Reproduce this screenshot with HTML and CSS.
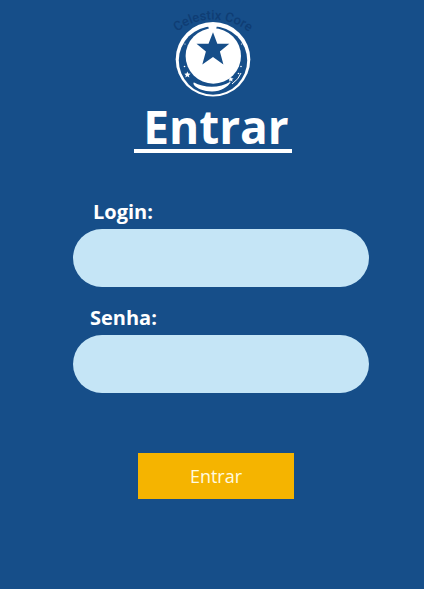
FILE: index.html
```html
<!DOCTYPE html>
<html lang="pt-BR">
<head>
  <meta charset="utf-8">
  <meta name="viewport" content="width=device-width, initial-scale=1">
  <title>Entrar</title>
  <link rel="stylesheet" href="styles.css">
</head>
<body>
  <main class="login">
    <header class="brand">
      <svg class="logo" viewBox="163 0 100 104" role="img" aria-label="Celestix Core">
        <defs>
          <path id="name-arc" d="M173 35.500A58 58 0 0 1 253 35.500"/>
        </defs>
        <text class="logo-name"><textPath href="#name-arc" startOffset="50%" text-anchor="middle">Celestix Core</textPath></text>
        <circle class="light" cx="213" cy="59.300" r="37.300"/>
        <circle class="dark" cx="213" cy="60.500" r="34.200"/>
        <circle class="light" cx="213.300" cy="56" r="27.700"/>
        <path class="light" d="M208 25h9l-1 5h-7z"/>
        <path class="light" d="M194 82.500C203 87.500 219 89 231 81.500C228 87 221 91.500 212 91.500C204 91.500 196 88 194 85C193.500 84 193 82.500 194 82.500z"/>
        <path class="line" d="M232 84Q239 79 241 73"/>
        <path class="dark" d="M213 32.300l4.300 11.400h12l-9.400 7.700 3.500 13.200-10.400-7.600-10.700 7.600 3.600-13.200-9.400-7.700h12z"/>
        <path class="light" d="M187.300 71.500l1 2.100 2.300.1-1.800 1.600.6 2.300-2-1.300-2.100 1.300.6-2.300-1.600-1.600 2.200-.1z"/>
        <path class="light" d="M230.800 76.500l.8 1.800 2 .1-1.500 1.400.5 1.900-1.800-1.100-1.800 1.100.5-1.900-1.500-1.400 2-.1z"/>
        <circle class="light" cx="184.500" cy="66.500" r=".8"/>
        <circle class="light" cx="185" cy="44" r=".6"/>
        <circle class="light" cx="241.500" cy="44" r=".6"/>
        <circle class="light" cx="241" cy="66.500" r=".8"/>
        <circle class="light" cx="238.500" cy="73.500" r=".8"/>
      </svg>
      <h1 class="title">Entrar</h1>
    </header>
    <form class="form">
      <div class="field">
        <label class="label label-login" for="login">Login:</label>
        <input class="input" id="login" name="login" type="text">
      </div>
      <div class="field">
        <label class="label" for="senha">Senha:</label>
        <input class="input" id="senha" name="senha" type="password">
      </div>
      <button class="submit" type="submit">Entrar</button>
    </form>
  </main>
</body>
</html>
```
FILE: styles.css
```css
* {
  box-sizing: border-box;
}

body {
  margin: 0;
  background: #164e89;
  color: #fff;
  font-family: "Open Sans", "Noto Sans", sans-serif;
}

.login {
  display: flex;
  flex-direction: column;
  gap: 45px;
}

.brand {
  display: flex;
  flex-direction: column;
  align-items: center;
  padding-left: 2px;
}

.logo {
  width: 100px;
  height: 104px;
}

.logo-name {
  fill: #0f3d74;
  font-family: Roboto, sans-serif;
  font-size: 13px;
  font-weight: 500;
}

.light {
  fill: #fff;
}

.dark {
  fill: #164e89;
}

.line {
  fill: none;
  stroke: #fff;
  stroke-width: 1;
}

.title {
  margin: 0;
  padding: 0 3px 0 9px;
  border-bottom: 4px solid #fff;
  font-size: 46px;
  font-weight: 700;
  line-height: 45px;
  white-space: nowrap;
}

.form {
  display: flex;
  flex-direction: column;
  gap: 17px;
  padding: 0 55px 0 73px;
}

.field {
  display: flex;
  flex-direction: column;
  gap: 3px;
}

.label {
  padding-left: 17px;
  font-size: 20px;
  font-weight: 700;
  line-height: 28px;
}

.label-login {
  padding-left: 20px;
}

.input {
  width: 100%;
  height: 58px;
  padding: 0 28px;
  border: 0;
  border-radius: 29px;
  background: #c5e5f6;
  color: #164e89;
  font: inherit;
  font-size: 20px;
}

.submit {
  align-self: center;
  width: 156px;
  height: 46px;
  margin: 43px 10px 0 0;
  padding: 0;
  border: 0;
  background: #f5b400;
  color: #fffbe0;
  font: inherit;
  font-size: 18px;
}
```
